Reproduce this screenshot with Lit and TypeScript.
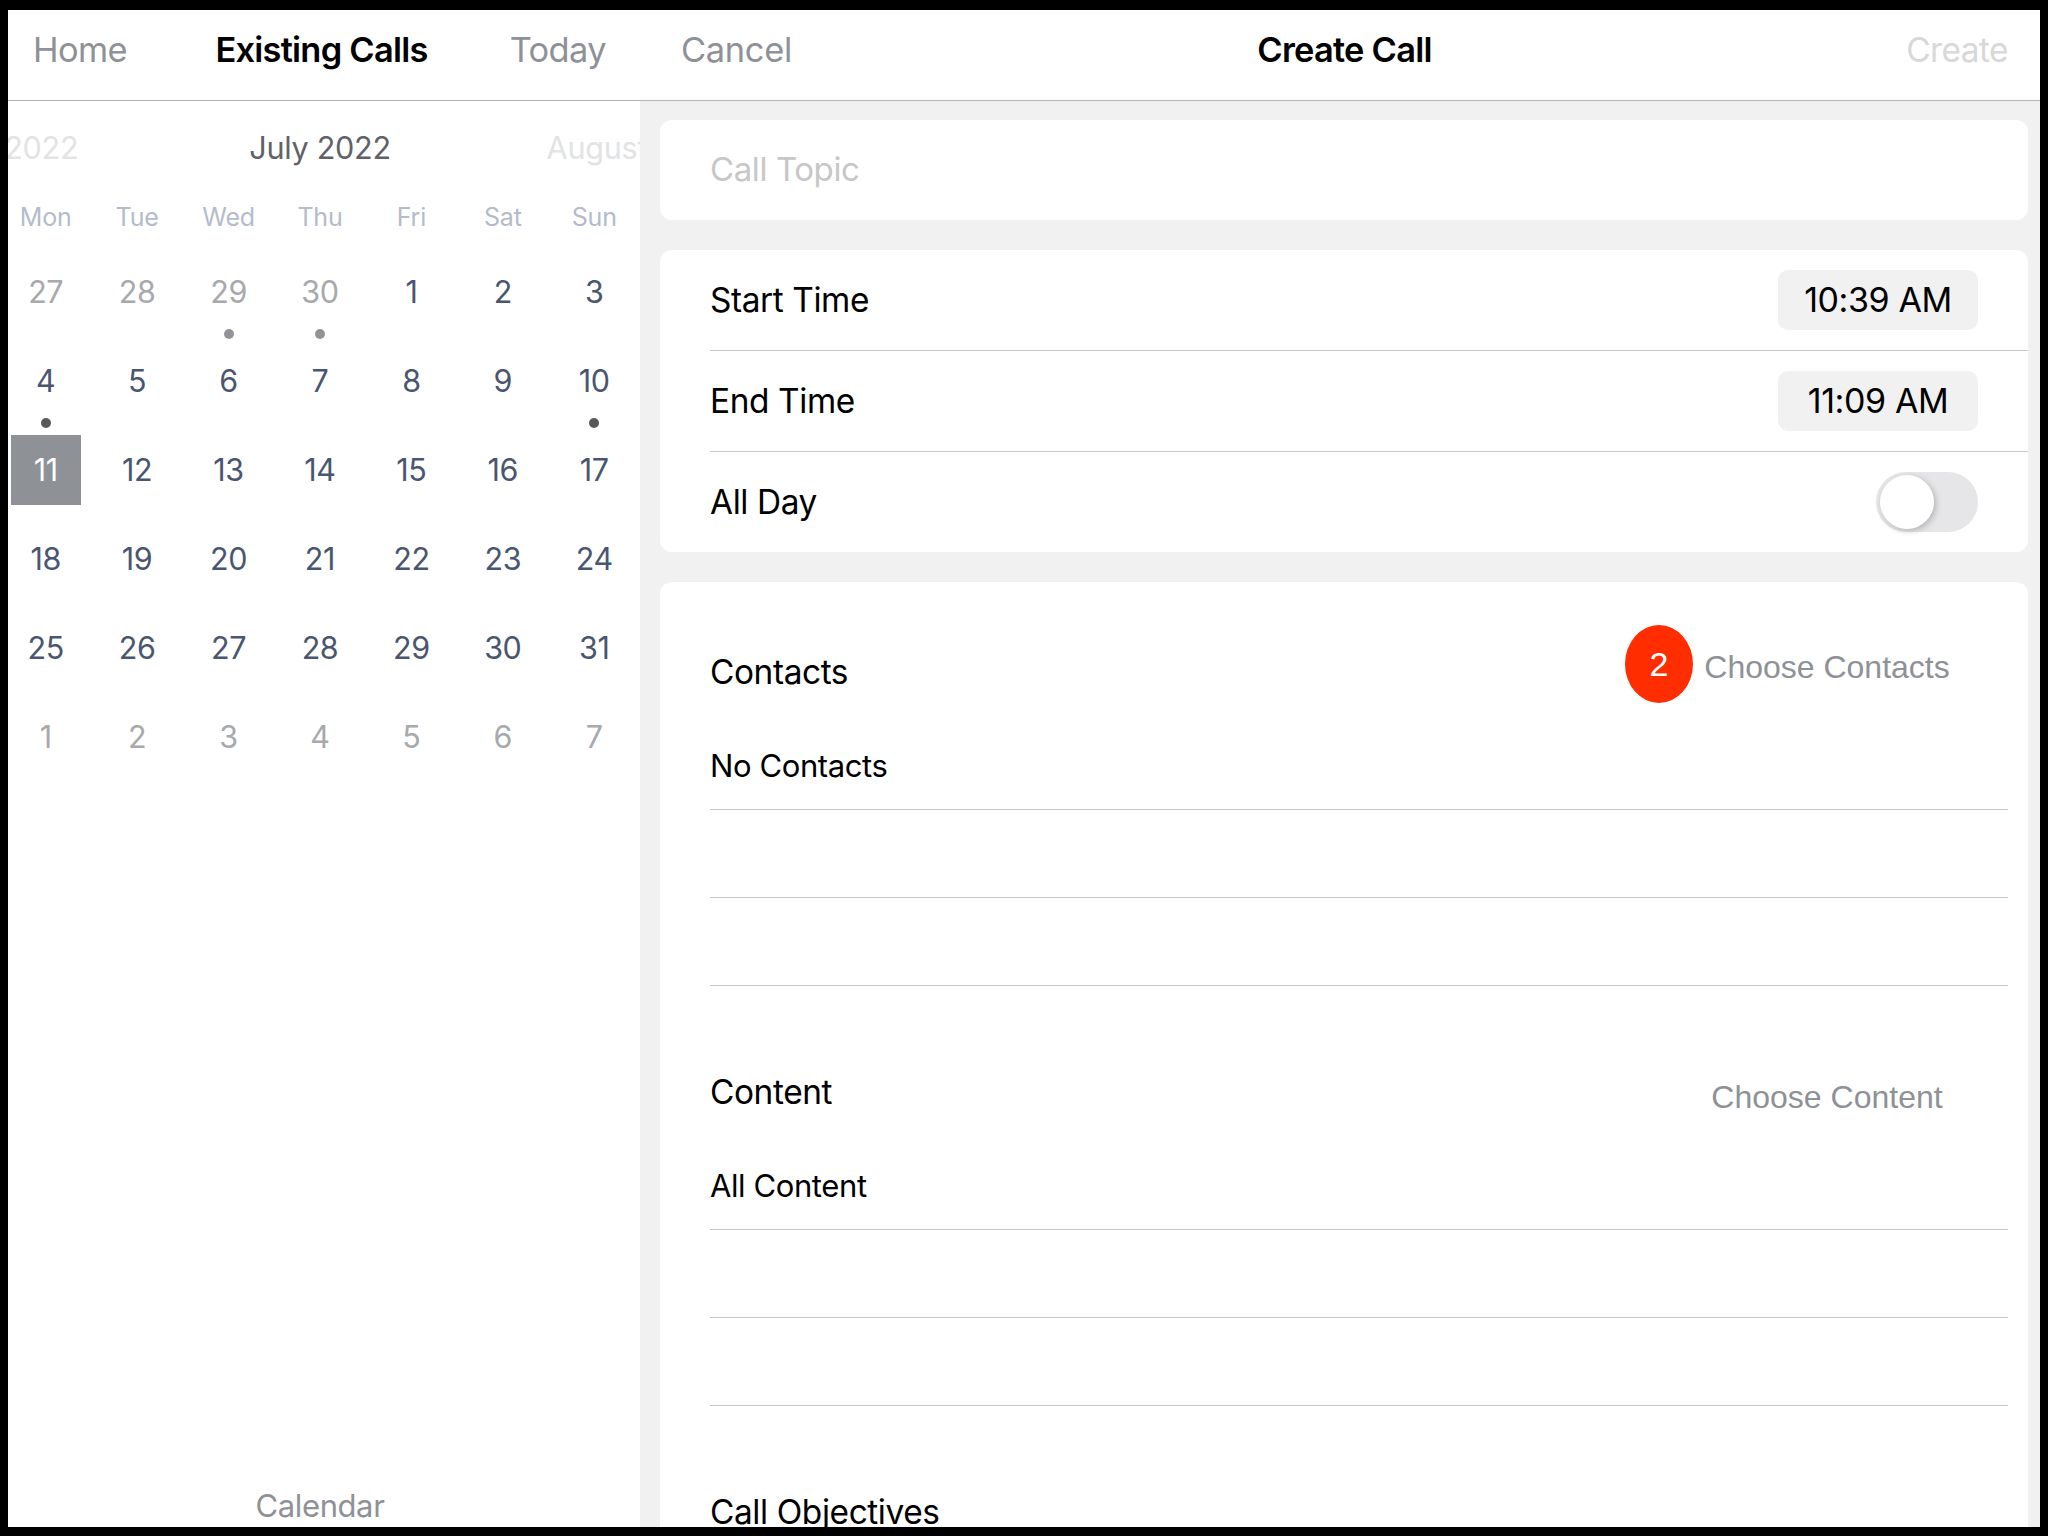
import { LitElement, html, css } from "lit";
import { customElement } from "lit/decorators.js";

const WEEK = ["Mon", "Tue", "Wed", "Thu", "Fri", "Sat", "Sun"];
type Day = { n: number; muted?: boolean; dot?: "light" | "dark"; sel?: boolean };
const days: Day[] = [
  { n: 27, muted: true }, { n: 28, muted: true }, { n: 29, muted: true, dot: "light" }, { n: 30, muted: true, dot: "light" },
  ...Array.from({ length: 31 }, (_, i): Day => ({
    n: i + 1,
    dot: i + 1 === 4 || i + 1 === 10 ? "dark" : undefined,
    sel: i + 1 === 11,
  })),
  ...[1, 2, 3, 4, 5, 6, 7].map((n): Day => ({ n, muted: true })),
];

@customElement("app-root")
export class AppRoot extends LitElement {
  static styles = css`
    :host { display: block; width: 2048px; height: 1536px; background: #000; font-family: Inter, "Liberation Sans", sans-serif; }
    .screen { box-sizing: border-box; width: 2048px; height: 1536px; padding: 10px 8px 9px; }
    .frame { width: 2032px; height: 1517px; overflow: hidden; background: #f1f1f1; display: flex; flex-direction: column; }
    header { flex: none; height: 91px; box-sizing: border-box; background: #fff; border-bottom: 1px solid #b4b4b4; display: flex; font-size: 34.4px; letter-spacing: -0.6px; color: #8e9196; line-height: 80px; }
    .hl { width: 632px; flex: none; display: grid; grid-template-columns: 1fr auto 1fr; padding: 0 34px 0 25px; box-sizing: border-box; }
    .hl span:last-child { justify-self: end; }
    .hl .strong { margin-left: 4px; }
    .hr { flex: 1; display: grid; grid-template-columns: 1fr auto 1fr; padding: 0 32px 0 41px; }
    .hr span:first-child { letter-spacing: -0.3px; }
    .hr span:last-child { justify-self: end; color: #d8d8d8; font-size: 33.5px; }
    .strong { color: #000; font-weight: 600; letter-spacing: -0.75px; }
    .body { flex: 1; min-height: 0; display: flex; margin-top: -1px; }
    aside { flex: none; width: 632px; margin-top: 1px; background: #fff; display: flex; flex-direction: column; overflow: hidden; }
    .months { display: flex; width: 954px; margin-left: -165px; height: 84px; margin-top: 6px; font-size: 30.6px; letter-spacing: -0.3px; line-height: 81px; text-align: center; color: #5f6369; flex: none; }
    .months span { width: 318px; flex: none; white-space: nowrap; }
    .months .side { color: #e2e3e4; }
    .grid { display: grid; grid-template-columns: repeat(7, 91.43px); margin-left: -8px; width: 640px; flex: none; }
    .wd { height: 52px; line-height: 52px; text-align: center; font-size: 25px; letter-spacing: -0.2px; color: #b4bbcc; }
    .days { grid-auto-rows: 89px; margin-top: 14px; }
    .d { position: relative; display: flex; justify-content: center; }
    .num { width: 70px; height: 70px; line-height: 70px; text-align: center; font-size: 30.5px; letter-spacing: -0.4px; color: #4a5670; }
    .muted .num { color: #a7a9ac; }
    .sel .num { background: #8e9195; color: #fff; }
    .dot { position: absolute; top: 72px; left: 50%; margin-left: -5px; width: 10px; height: 10px; border-radius: 50%; }
    .dot.light { background: #929497; }
    .dot.dark { background: #58595b; }
    .foot { margin-top: auto; height: 40px; line-height: 40px; text-align: center; font-size: 31px; letter-spacing: -0.4px; color: #8e9196; padding: 0 8px 1px 0; }
    main { flex: 1; min-width: 0; padding: 20px 12px 0 20px; display: flex; flex-direction: column; gap: 30px; overflow: hidden; }
    .card { background: #fff; border-radius: 12px; flex: none; }
    .topic { height: 100px; box-sizing: border-box; padding-left: 50px; line-height: 98px; font-size: 33px; letter-spacing: -0.4px; color: #c7c7c7; }
    .rows { height: 302px; padding-left: 50px; display: flex; flex-direction: column; font-size: 33.4px; letter-spacing: -0.4px; color: #000; }
    .row { flex: 1; display: flex; align-items: center; justify-content: space-between; padding-right: 50px; }
    .row + .row { border-top: 1px solid #c8c8c8; }
    .pill { width: 200px; height: 60px; border-radius: 10px; background: #f1f1f2; text-align: center; line-height: 60px; font-size: 34px; }
    .toggle { position: relative; width: 102px; height: 60px; border-radius: 30px; background: #e6e6e8; }
    .knob { position: absolute; left: 4px; top: 3px; width: 54px; height: 54px; border-radius: 50%; background: #fff; box-shadow: 2px 2px 6px rgba(0,0,0,.22); }
    .big { padding: 43px 20px 0 50px; flex: 1; border-bottom-left-radius: 0; border-bottom-right-radius: 0; }
    .head { height: 78px; display: flex; justify-content: space-between; align-items: flex-start; color: #000; font-size: 33.4px; letter-spacing: -0.4px; }
    .head .t { line-height: 40px; margin-top: 27px; }
    .choose { position: relative; width: 300px; margin-right: 31px; text-align: center; font: 32px/40px "Liberation Sans", Arial, sans-serif; letter-spacing: 0; color: #8e9196; margin-top: 22px; }
    .choose.low { margin-top: 32px; }
    .badge { position: absolute; left: -52px; top: -22px; width: 68px; height: 78px; border-radius: 50%; background: #ff2d00; color: #fff; line-height: 78px; font-size: 34px; }
    .list { margin: 19px 0 59px; }
    .li { height: 88px; box-sizing: border-box; border-bottom: 1px solid #c8c8c8; line-height: 87px; font-size: 31px; letter-spacing: -0.4px; color: #000; }
  `;

  private section(title: string, choose: unknown, first: string) {
    return html`
      <div class="head"><span class="t">${title}</span>${choose}</div>
      <div class="list">
        <div class="li">${first}</div><div class="li"></div><div class="li"></div>
      </div>`;
  }

  render() {
    return html`
      <div class="screen"><div class="frame">
        <header>
          <div class="hl"><span>Home</span><span class="strong">Existing Calls</span><span>Today</span></div>
          <div class="hr"><span>Cancel</span><span class="strong">Create Call</span><span>Create</span></div>
        </header>
        <div class="body">
          <aside>
            <div class="months"><span class="side">June 2022</span><span>July 2022</span><span class="side">August 2022</span></div>
            <div class="grid">${WEEK.map((w) => html`<div class="wd">${w}</div>`)}</div>
            <div class="grid days">
              ${days.map((d) => html`<div class="d ${d.muted ? "muted" : ""} ${d.sel ? "sel" : ""}"><div class="num">${d.n}</div>${d.dot ? html`<i class="dot ${d.dot}"></i>` : ""}</div>`)}
            </div>
            <div class="foot">Calendar</div>
          </aside>
          <main>
            <div class="card topic">Call Topic</div>
            <div class="card rows">
              <div class="row"><span>Start Time</span><span class="pill">10:39 AM</span></div>
              <div class="row"><span>End Time</span><span class="pill">11:09 AM</span></div>
              <div class="row"><span>All Day</span><span class="toggle"><i class="knob"></i></span></div>
            </div>
            <div class="card big">
              ${this.section("Contacts", html`<div class="choose"><span class="badge">2</span>Choose Contacts</div>`, "No Contacts")}
              ${this.section("Content", html`<div class="choose low">Choose Content</div>`, "All Content")}
              <div class="head"><span class="t">Call Objectives</span></div>
            </div>
          </main>
        </div>
      </div></div>`;
  }
}
